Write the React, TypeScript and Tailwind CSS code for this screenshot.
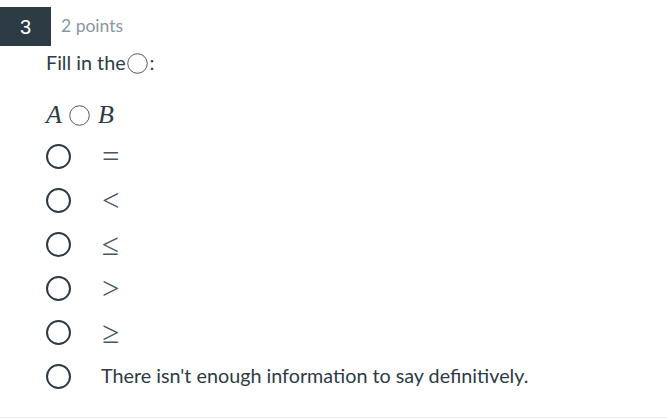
const options = ["=", "<", "≤", ">", "≥"];

function Radio() {
  return (
    <span className="inline-block h-[25px] w-[25px] shrink-0 rounded-full border-[2.5px] border-[#2d3b45] bg-white" />
  );
}

function MathCircle({ size }: { size: number }) {
  return (
    <svg width={size} height={size} viewBox="0 0 20 20" className="inline-block">
      <circle cx="10" cy="10" r="9.3" fill="none" stroke="#2d3b45" strokeWidth="0.8" />
    </svg>
  );
}

export default function App() {
  return (
    <div className="relative h-[419px] w-[667px] overflow-hidden bg-white text-[#2d3b45]" style={{ fontFamily: "Lato, sans-serif" }}>
      <div className="flex items-center pt-[7px]">
        <div
          className="flex h-[39px] w-[51px] items-center justify-center bg-[#2d3b45] text-[20px] text-white"
          style={{ fontFamily: "'Liberation Sans', Arial, sans-serif" }}
        >
          3
        </div>
        <span className="ml-[10px] text-[17.5px] text-[#8b969e]">2 points</span>
      </div>

      <div className="pl-[46px]">
        <p className="mt-[3px] flex items-center text-[19.75px] leading-[28px]">
          Fill in the
          <span className="ml-[1px] mr-[2px] inline-flex">
            <MathCircle size={21} />
          </span>
          :
        </p>

        <div
          className="mt-[23px] flex items-center text-[26px] italic leading-[30px]"
          style={{ fontFamily: "'Liberation Serif', 'Times New Roman', serif" }}
        >
          <span>A</span>
          <span className="ml-[7px] inline-flex">
            <MathCircle size={21} />
          </span>
          <span className="ml-[8px]">B</span>
        </div>

        <ul className="mt-[4px]">
          {options.map((o) => (
            <li key={o} className="flex h-[44px] items-center">
              <Radio />
              <span
                className="ml-[31px] text-[31px] leading-none text-[#4a5660]"
                style={{ fontFamily: "'Liberation Serif', 'Times New Roman', serif" }}
              >
                {o}
              </span>
            </li>
          ))}
          <li className="flex h-[44px] items-center">
            <Radio />
            <span className="ml-[30px] text-[19.75px]">There isn't enough information to say definitively.</span>
          </li>
        </ul>
      </div>

      <div className="absolute bottom-[1px] left-0 right-0 h-px bg-[#ebebeb]" />
    </div>
  );
}
